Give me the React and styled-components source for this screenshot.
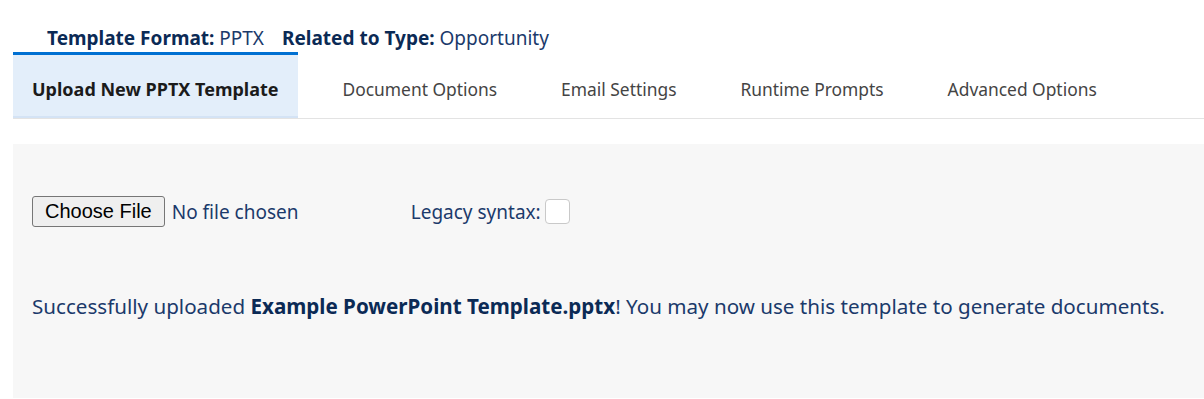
import React from "react";
import styled, { createGlobalStyle } from "styled-components";

const GlobalStyle = createGlobalStyle`
  body {
    margin: 0;
    background: #fff;
    font-family: "Noto Sans", "Open Sans", sans-serif;
  }
`;

const Page = styled.div`
  padding: 26px 0 0 13px;
  width: 1191px;
  height: 373px;
  overflow: hidden;
`;

const InfoLine = styled.div`
  padding-left: 34px;
  font-size: 19px;
  line-height: 24px;
  color: #1b3a6b;
  display: flex;
  gap: 18px;
`;

const InfoLabel = styled.b`
  font-weight: 700;
  color: #0b2a55;
`;

const TabBar = styled.div`
  display: flex;
  gap: 26px;
  margin-top: 2px;
  border-bottom: 1px solid #e3e3e3;
`;

const Tab = styled.div`
  box-sizing: border-box;
  height: 66px;
  padding: 7px 19px 0;
  display: flex;
  align-items: center;
  font-size: ${(p) => (p.$active ? "18px" : "17.4px")};
  color: ${(p) => (p.$active ? "#1b1b1b" : "#444")};
  font-weight: ${(p) => (p.$active ? 700 : 400)};
  background: ${(p) => (p.$active ? "#e3eefa" : "transparent")};
  border-top: 3px solid ${(p) => (p.$active ? "#0070d2" : "transparent")};
  border-bottom: 2px solid ${(p) => (p.$active ? "#d4e3f5" : "transparent")};
`;

const Panel = styled.div`
  margin-top: 25px;
  background: #f7f7f7;
  padding: 52px 19px 0;
  height: 254px;
  box-sizing: border-box;
  color: #1b3a6b;
`;

const UploadRow = styled.div`
  display: flex;
  align-items: center;
  font-size: 19px;
`;

const FileButton = styled.button`
  font-family: "Liberation Sans", Arial, sans-serif;
  font-size: 20px;
  color: #000;
  background: #efefef;
  border: 1px solid #767676;
  border-radius: 3px;
  height: 31px;
  padding: 0 12px;
  margin-right: 7px;
`;

const NoFile = styled.span`
  width: 239px;
`;

const Checkbox = styled.span`
  display: inline-block;
  width: 23px;
  height: 23px;
  margin-left: 4px;
  background: #fff;
  border: 1px solid #c9c9c9;
  border-radius: 4px;
`;

const Message = styled.p`
  margin: 65px 0 0;
  font-size: 20.6px;
  line-height: 28px;
  b {
    color: #0b2a55;
  }
`;

const tabs = [
  "Upload New PPTX Template",
  "Document Options",
  "Email Settings",
  "Runtime Prompts",
  "Advanced Options",
];

export default function App() {
  return (
    <Page>
      <GlobalStyle />
      <InfoLine>
        <span>
          <InfoLabel>Template Format:</InfoLabel> PPTX
        </span>
        <span>
          <InfoLabel>Related to Type:</InfoLabel> Opportunity
        </span>
      </InfoLine>
      <TabBar>
        {tabs.map((t, i) => (
          <Tab key={t} $active={i === 0}>
            {t}
          </Tab>
        ))}
      </TabBar>
      <Panel>
        <UploadRow>
          <FileButton>Choose File</FileButton>
          <NoFile>No file chosen</NoFile>
          <span>Legacy syntax:</span>
          <Checkbox />
        </UploadRow>
        <Message>
          Successfully uploaded <b>Example PowerPoint Template.pptx</b>! You may
          now use this template to generate documents.
        </Message>
      </Panel>
    </Page>
  );
}
